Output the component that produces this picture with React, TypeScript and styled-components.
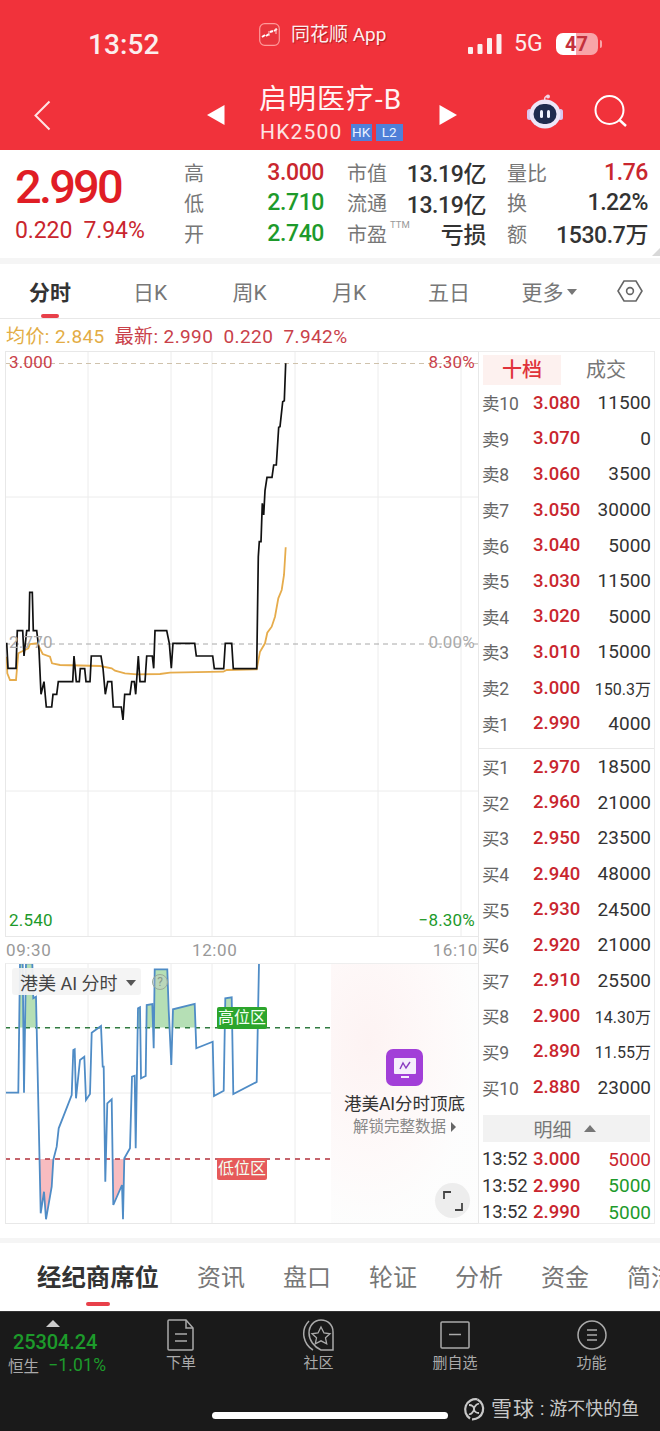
import React from 'react';
import styled, { createGlobalStyle } from 'styled-components';

const SANS = `Roboto, "Noto Sans CJK SC", sans-serif`;
const RED = '#c9262e';
const GREEN = '#1d9a2b';
const GRID = '#ececec';

const Global = createGlobalStyle`
  html, body { margin: 0; padding: 0; background: #fff; }
  body { font-family: ${SANS}; }
`;

const Page = styled.div`
  width: 660px; height: 1431px; overflow: hidden; display: flex; flex-direction: column;
  background: #fff; color: #333;
`;

/* ---------- header ---------- */
const Header = styled.header`
  height: 150px; flex: none; background: #f1323b; color: #fff; display: flex; flex-direction: column;
`;
const StatusRow = styled.div`
  height: 72px; display: grid; grid-template-columns: 259px 209px 1fr; align-items: start;
`;
const Clock = styled.div`
  padding: 27px 0 0 88px; font-size: 28px; line-height: 36px; font-weight: 500; color: #fbeeee; letter-spacing: .1px;
`;
const AppTag = styled.div`
  padding-top: 23px; display: flex; align-items: center; gap: 11px; font-size: 19px; line-height: 23px;
  color: #fdeeee; text-shadow: 1px 1px 1px rgba(90,0,0,.45);
`;
const StatusRight = styled.div`
  padding-top: 32px; display: flex; align-items: center; height: 24px;
`;
const FiveG = styled.span`
  margin: 0 13px 0 12px; font-size: 23px; line-height: 24px; color: #fbeeee;
`;
const Battery = styled.div<{ $level: number }>`
  position: relative; width: 42px; height: 22px; border-radius: 7px; text-align: center;
  font-size: 20px; line-height: 22px; font-weight: 700; color: #c4303c;
  background: linear-gradient(to right, #fff ${p => p.$level}%, #f8a4a8 ${p => p.$level}%);
  &::after {
    content: ''; position: absolute; right: -4px; top: 7px; width: 2px; height: 8px; border-radius: 0 2px 2px 0; background: #f8a4a8;
  }
`;
const NavRow = styled.div`
  height: 78px; display: grid; grid-template-columns: 207px 52px 180px 87px 67px 1fr; align-items: center;
`;
const Cell = styled.div<{ $pl?: number; $pt?: number }>`
  padding-left: ${p => p.$pl ?? 0}px; padding-top: ${p => p.$pt ?? 0}px; display: flex;
`;
const TitleBlock = styled.div`
  display: flex; flex-direction: column; align-items: flex-start;
`;
const Title = styled.div`
  font-size: 28px; line-height: 32px; letter-spacing: 1px; color: #fff4f4; margin-top: 6px; white-space: nowrap;
`;
const Code = styled.div`
  margin-top: 4px; padding-left: 1px; display: flex; align-items: center; font-size: 21px; line-height: 24px; color: #fde4e4; letter-spacing: 1.2px;
`;
const Badge = styled.span<{ $w: number; $ml: number }>`
  width: ${p => p.$w}px; margin-left: ${p => p.$ml}px; height: 17px; background: #4f80d8; color: #e8f0ff;
  font-size: 13.5px; line-height: 17px; text-align: center; letter-spacing: 0;
`;

/* ---------- quote ---------- */
const Quote = styled.section`
  height: 108px; flex: none; display: grid; grid-template-columns: 184px 140px 23px 139px 21px 141px; position: relative;
`;
const PriceBox = styled.div`
  padding: 12px 0 0 15px;
`;
const BigPrice = styled.div`
  font-size: 47px; line-height: 50px; font-weight: 500; color: #e01d25; letter-spacing: -2.8px;
`;
const PriceChange = styled.div`
  margin-top: 6px; font-size: 23px; line-height: 26px; color: #c9262e; letter-spacing: -.1px; white-space: pre;
`;
const StatCol = styled.div`
  padding-top: 7px; display: grid; grid-auto-rows: 30.5px; align-items: center;
`;
const StatRow = styled.div`
  display: flex; justify-content: space-between; align-items: center; white-space: nowrap;
`;
const StatLabel = styled.span`
  font-size: 20px; color: #777;
  position: relative;
`;
const Ttm = styled.sup`
  position: absolute; left: 43px; top: 0; font-size: 9.5px; line-height: 12px; color: #999;
`;
const StatValue = styled.span<{ $c?: string }>`
  font-size: 23px; font-weight: 500; letter-spacing: -.4px; color: ${p => p.$c ?? '#333'};
`;
const Fold = styled.div`
  position: absolute; right: 0; bottom: 2px; width: 0; height: 0;
  border-left: 8px solid transparent; border-bottom: 8px solid #d8d8d8;
`;
const Band = styled.div<{ $h: number }>`
  height: ${p => p.$h}px; flex: none; background: #f5f5f5;
`;
const Spacer = styled.div`
  height: 14px; flex: none;
`;

/* ---------- tabs ---------- */
const ChartTabs = styled.nav`
  height: 55px; flex: none; display: grid; grid-template-columns: 100px 100px 99px 100px 100px 100px 1fr;
  border-bottom: 1px solid #e8e8e8; box-sizing: border-box; position: relative;
`;
const ChartTab = styled.div<{ $on?: boolean }>`
  position: relative; display: flex; align-items: center; justify-content: center; gap: 3px; height: 54px;
  font-size: 21px; color: ${p => (p.$on ? '#333' : '#777')}; font-weight: ${p => (p.$on ? 700 : 400)};
  ${p => p.$on && `&::after { content: ''; position: absolute; left: 41px; bottom: 0; width: 18px; height: 4px; border-radius: 2px; background: #e8404a; }`}
`;
const Caret = styled.span<{ $c?: string; $s?: number }>`
  display: inline-block; width: 0; height: 0; margin-top: 2px;
  border-left: ${p => p.$s ?? 5}px solid transparent; border-right: ${p => p.$s ?? 5}px solid transparent;
  border-top: ${p => (p.$s ?? 5) + 1}px solid ${p => p.$c ?? '#777'};
`;
const Legend = styled.div`
  height: 32px; flex: none; box-sizing: border-box; display: flex; align-items: center; gap: 10px; padding: 0 0 2px 6px;
  font-size: 19px; letter-spacing: .4px; white-space: pre;
`;
const LegendText = styled.span<{ $c: string }>`
  color: ${p => p.$c};
`;

/* ---------- chart area ---------- */
const Board = styled.main`
  height: 873px; flex: none; padding-left: 5px; display: flex;
`;
const Left = styled.div`
  width: 473px; flex: none; display: flex; flex-direction: column;
`;
const MainChart = styled.div`
  position: relative; height: 586px; flex: none; box-sizing: border-box; border: 1px solid #e8e8e8; border-right: 0;
`;
const Plot = styled.svg`
  display: block; width: 100%; height: 100%;
`;
const AxisLabel = styled.span<{ $c: string; $side: 'left' | 'right'; $y: number }>`
  position: absolute; ${p => p.$side}: 3px; top: ${p => p.$y}px;
  font-size: 17px; line-height: 20px; color: ${p => p.$c}; letter-spacing: .2px;
`;
const TimeAxis = styled.div`
  height: 26px; flex: none; box-sizing: border-box; padding: 0 0 1px 1px; display: grid; grid-template-columns: 186px 1fr auto; align-items: center;
  font-size: 17px; color: #999; letter-spacing: .6px;
`;
const SubChart = styled.div`
  position: relative; height: 261px; flex: none; box-sizing: border-box; border-bottom: 1px solid #e8e8e8; border-left: 1px solid #e8e8e8;
  border-top: 1px solid #eee;
`;
const IndicatorChip = styled.div`
  position: absolute; left: 6px; top: 4px; width: 129px; height: 27px; box-sizing: border-box; background: rgba(243,243,243,.94);
  border-radius: 3px; padding-left: 8px; display: flex; align-items: center; gap: 8px; font-size: 18px; color: #444; white-space: pre;
`;
const Help = styled.div`
  position: absolute; left: 146px; top: 10px; width: 16px; height: 16px; box-sizing: border-box; border: 1.5px solid #9aaa9a;
  border-radius: 50%; font-size: 12px; line-height: 14px; text-align: center; color: #8a9a8a; background: rgba(200,200,200,.3);
`;
const ZoneTag = styled.div<{ $bg: string; $y: number }>`
  position: absolute; left: 211px; top: ${p => p.$y}px; width: 50px; height: 22px; border-radius: 2px; background: ${p => p.$bg};
  color: #f2fff2; font-size: 16px; line-height: 22px; text-align: center;
`;
const Unlock = styled.div`
  position: absolute; left: 325px; right: 0; top: 0; bottom: 0; display: flex; flex-direction: column; align-items: center;
  padding-top: 85px; box-sizing: border-box;
  background: radial-gradient(ellipse at 25% 30%, #fdf3f3 0%, rgba(254,249,249,.9) 45%, rgba(253,253,253,.9) 70%),
    linear-gradient(#fdfdfd, #f9fbfa);
`;
const UnlockIcon = styled.div`
  width: 37px; height: 37px; border-radius: 7px; background: #a23fd8; display: flex; align-items: center; justify-content: center;
`;
const UnlockTitle = styled.div`
  margin-top: 6px; font-size: 17.5px; line-height: 24px; color: #333; white-space: nowrap;
`;
const UnlockSub = styled.div`
  display: flex; align-items: center; gap: 5px; margin-top: 0; font-size: 15.5px; line-height: 22px; color: #888; white-space: nowrap;
`;
const TriRight = styled.span`
  width: 0; height: 0; border-top: 5px solid transparent; border-bottom: 5px solid transparent; border-left: 5px solid #666;
`;
const ExpandBtn = styled.div`
  position: absolute; right: 8px; bottom: 5px; width: 35px; height: 35px; border-radius: 50%; background: #ededed;
  display: flex; align-items: center; justify-content: center;
`;

/* ---------- order book ---------- */
const Book = styled.aside`
  width: 177px; flex: none; box-sizing: border-box; height: 873px; border: 1px solid #ececec; border-left: 1px solid #e8e8e8;
  display: flex; flex-direction: column; padding: 3px 3px 0 3px;
`;
const BookTabs = styled.div`
  height: 30px; flex: none; margin-left: 1px; display: grid; grid-template-columns: 78px 1fr; align-items: center;
`;
const BookTab = styled.div<{ $on?: boolean }>`
  height: 30px; line-height: 30px; text-align: center; font-size: 20px; letter-spacing: 0;
  color: ${p => (p.$on ? '#e0323a' : '#777')}; background: ${p => (p.$on ? '#fdf1ef' : 'transparent')};
  font-weight: ${p => (p.$on ? 500 : 400)};
`;
const BookRows = styled.div`
  flex: none; display: grid; grid-auto-rows: 35.6px;
`;
const BookRow = styled.div`
  display: grid; grid-template-columns: 51px 48px 1fr; align-items: center; white-space: nowrap;
`;
const Side = styled.span`
  font-size: 17.5px; color: #666; letter-spacing: -.2px;
`;
const Px = styled.span<{ $c?: string }>`
  font-size: 18.5px; font-weight: 500; color: ${p => p.$c ?? RED}; letter-spacing: 0;
`;
const Qty = styled.span<{ $c?: string; $small?: boolean }>`
  text-align: right; font-size: ${p => (p.$small ? 16 : 19)}px; color: ${p => p.$c ?? '#333'};
`;
const BookDivider = styled.div`
  height: 1px; margin: 7px -3px 0; background: #e8e8e8; flex: none;
`;
const DetailHead = styled.div`
  flex: none; height: 27px; margin: 10px 1px 0; background: #f2f2f2; display: flex; align-items: center; justify-content: center; gap: 12px;
  font-size: 19px; color: #777; padding-right: 4px;
`;
const UpTri = styled.span<{ $c: string; $w: number; $h: number }>`
  display: block; width: 0; height: 0; border-left: ${p => p.$w}px solid transparent; border-right: ${p => p.$w}px solid transparent;
  border-bottom: ${p => p.$h}px solid ${p => p.$c};
`;
const Trades = styled.div`
  flex: none; margin-top: 4px; display: grid; grid-auto-rows: 26.5px;
`;
const Trade = styled.div`
  display: grid; grid-template-columns: 51px 48px 1fr; align-items: center;
`;
const TradeTime = styled.span`
  font-size: 18.5px; color: #333; letter-spacing: -.1px;
`;

/* ---------- info tabs ---------- */
const InfoTabs = styled.nav`
  height: 68px; flex: none; display: flex; gap: 38px; padding-left: 37px; align-items: center; overflow: hidden; position: relative;
  white-space: nowrap;
`;
const InfoTab = styled.div<{ $on?: boolean }>`
  position: relative; flex: none; font-size: ${p => (p.$on ? 24.4 : 24)}px; line-height: 68px; height: 68px; padding-top: 1px; box-sizing: border-box;
  font-weight: ${p => (p.$on ? 700 : 400)}; color: ${p => (p.$on ? '#333' : '#777')};
  ${p => p.$on && `&::after { content: ''; position: absolute; left: 49px; bottom: 5px; width: 24px; height: 4px; border-radius: 2px; background: #e8404a; }`}
`;

/* ---------- bottom ---------- */
const Footer = styled.footer`
  flex: 1; background: #1a1a1a; border-top: 1px solid #333; box-sizing: border-box; display: flex; flex-direction: column;
`;
const FooterNav = styled.div`
  height: 67px; flex: none; display: grid; grid-template-columns: 112px 138px 137px 136px 1fr;
`;
const IndexBlock = styled.div`
  display: flex; flex-direction: column; position: relative; padding-left: 13px;
`;
const IndexTri = styled.div`
  margin: 8px 0 0 33px;
`;
const IndexValue = styled.div`
  margin-top: 3px; font-size: 20px; line-height: 24px; font-weight: 500; color: ${GREEN}; letter-spacing: -.1px;
`;
const IndexMeta = styled.div`
  margin: 0 0 0 -5px; display: flex; align-items: center; gap: 9px; white-space: nowrap;
`;
const IndexName = styled.span`
  font-size: 15.5px; color: #aaa;
`;
const IndexPct = styled.span`
  font-size: 17.5px; color: ${GREEN}; letter-spacing: .2px;
`;
const NavItem = styled.div`
  display: flex; flex-direction: column; align-items: center; padding-top: 7px; font-size: 15px; line-height: 20px; color: #aaa; gap: 2px;
`;
const NavIcon = styled.svg`
  display: block; width: 34px; height: 32px;
`;
const FooterBase = styled.div`
  flex: 1; display: flex; align-items: flex-start; padding-left: 212px;
`;
const HomeBar = styled.div`
  width: 236px; height: 7px; margin-top: 33px; border-radius: 4px; background: #fff; flex: none;
`;
const Mark = styled.div`
  margin: 18px 0 0 14px; display: flex; align-items: center; font-size: 18px; line-height: 24px; color: #c8c8c8; white-space: pre;
`;
const MarkBrand = styled.span`
  margin-left: 5px; font-size: 21px; letter-spacing: 1px;
`;
const MarkSep = styled.span`
  margin: 0 5px 0 5px;
`;

/* ---------- data ---------- */
type P = [number, number][];
const toPts = (a: P, oy: number) => a.map(([x, y]) => `${(x / 3).toFixed(1)},${(oy + y / 3).toFixed(1)}`).join(' ');

const blackLine: P = [[20,908],[24,985],[48,985],[52,872],[68,872],[72,948],[80,872],[87,872],[89,757],[97,757],[100,872],[110,872],[117,930],[123,1063],[132,1025],[139,1101],[155,1101],[159,1063],[170,1063],[175,1025],[218,1025],[222,948],[229,1025],[238,1025],[241,986],[254,986],[258,1025],[270,1025],[274,948],[303,948],[309,985],[316,1063],[323,1025],[335,1025],[340,1101],[364,1101],[369,1140],[374,1063],[390,1063],[395,1025],[403,1025],[407,1063],[415,948],[420,1025],[435,1025],[440,948],[457,948],[461,985],[465,872],[500,872],[508,910],[514,985],[519,910],[584,910],[589,948],[638,948],[643,986],[671,986],[676,910],[695,910],[700,986],[770,986],[775,650],[778,605],[783,605],[787,490],[791,525],[795,452],[801,412],[816,412],[821,375],[829,375],[836,262],[840,260],[848,185],[853,182],[857,70]];
const avgLine: P = [[20,950],[22,1000],[30,1020],[48,1020],[55,940],[70,932],[85,925],[90,912],[112,910],[128,942],[150,950],[156,970],[180,975],[300,978],[335,985],[345,992],[375,1000],[410,1003],[480,1002],[510,998],[670,995],[680,990],[770,988],[780,935],[795,910],[802,878],[815,860],[825,830],[835,775],[845,750],[852,705],[857,622]];
const aiLine: P = [[18,488],[55,488],[60,100],[68,100],[72,488],[78,100],[97,100],[100,205],[108,200],[122,850],[132,785],[138,868],[155,770],[160,690],[170,650],[176,595],[190,560],[215,495],[220,360],[224,358],[228,505],[240,390],[253,380],[258,510],[270,492],[275,308],[303,288],[308,410],[311,410],[316,755],[322,520],[335,508],[340,825],[366,765],[369,868],[373,685],[390,655],[396,440],[404,437],[407,655],[414,235],[420,232],[423,445],[437,438],[440,225],[457,222],[461,355],[464,118],[502,118],[506,240],[514,405],[519,238],[584,222],[589,355],[638,335],[642,498],[671,482],[676,205],[695,202],[700,492],[770,456],[777,100]];

const asks = [['卖10','3.080','11500'],['卖9','3.070','0'],['卖8','3.060','3500'],['卖7','3.050','30000'],['卖6','3.040','5000'],['卖5','3.030','11500'],['卖4','3.020','5000'],['卖3','3.010','15000'],['卖2','3.000','150.3万'],['卖1','2.990','4000']];
const bids = [['买1','2.970','18500'],['买2','2.960','21000'],['买3','2.950','23500'],['买4','2.940','48000'],['买5','2.930','24500'],['买6','2.920','21000'],['买7','2.910','25500'],['买8','2.900','14.30万'],['买9','2.890','11.55万'],['买10','2.880','23000']];
const VLINES = [88, 171, 212, 295, 378, 461];

const Rows = ({ data }: { data: string[][] }) => (
  <BookRows>
    {data.map(r => (
      <BookRow key={r[0]}>
        <Side>{r[0]}</Side>
        <Px>{r[1]}</Px>
        <Qty $small={r[2].includes('万')}>{r[2]}</Qty>
      </BookRow>
    ))}
  </BookRows>
);

const Grid = ({ ys, y1, y2 }: { ys: number[]; y1: number; y2: number }) => (
  <g stroke={GRID} strokeWidth="1">
    {VLINES.map(x => <line key={x} x1={x} x2={x} y1={y1} y2={y2} />)}
    {ys.map(y => <line key={y} x1="5" x2="478" y1={y} y2={y} />)}
  </g>
);

export default function App() {
  return (
    <Page>
      <Global />
      <Header>
        <StatusRow>
          <Clock>13:52</Clock>
          <AppTag>
            <svg width="21" height="23" viewBox="0 0 21 23">
              <rect x=".7" y=".7" width="19.6" height="21.6" rx="5" fill="#e8353d" stroke="#ff9a9a" strokeWidth="1.2" />
              <path d="M3 14l3-2M7 13l3-2M11 9l3-1M15 8l3-2" stroke="#fff" strokeWidth="2" />
              <path d="M17 5v6M10 8v5" stroke="#ffd2d2" strokeWidth="1" />
            </svg>
            同花顺 App
          </AppTag>
          <StatusRight>
            <svg width="34" height="22" viewBox="0 0 34 22">
              <rect x="0" y="14" width="5" height="7" rx="1" fill="#fbeeee" />
              <rect x="9.5" y="11" width="5" height="10" rx="1" fill="#fbeeee" />
              <rect x="19" y="5" width="5" height="16" rx="1" fill="#fbeeee" />
              <rect x="28.5" y="1" width="5" height="20" rx="1" fill="#fbeeee" />
            </svg>
            <FiveG>5G</FiveG>
            <Battery $level={47}>47</Battery>
          </StatusRight>
        </StatusRow>
        <NavRow>
          <Cell $pl={33} $pt={8}>
            <svg width="18" height="31" viewBox="0 0 18 31" fill="none">
              <path d="M16.5 1.5L2.5 15.5l14 14" stroke="#ffe4e4" strokeWidth="2" />
            </svg>
          </Cell>
          <Cell $pt={8}>
            <svg width="18" height="20" viewBox="0 0 18 20"><path d="M0 10L17.500 0v20z" fill="#fff" /></svg>
          </Cell>
          <TitleBlock>
            <Title>启明医疗-B</Title>
            <Code>
              HK2500
              <Badge $w={21} $ml={8}>HK</Badge>
              <Badge $w={27} $ml={4}>L2</Badge>
            </Code>
          </TitleBlock>
          <Cell $pt={8}>
            <svg width="18" height="20" viewBox="0 0 18 20"><path d="M18 10L.5 0v20z" fill="#fff" /></svg>
          </Cell>
          <Cell $pt={2}>
            <svg width="38" height="36" viewBox="0 0 38 36">
              <path d="M19 7c-1-3 0-5 3-5" stroke="#f4d4e4" strokeWidth="1.5" fill="none" />
              <circle cx="22" cy="2.5" r="2" fill="#f4d4e4" />
              <rect x="1" y="15" width="5" height="11" rx="2.5" fill="#d8c6ee" />
              <rect x="32" y="15" width="5" height="11" rx="2.5" fill="#d8c6ee" />
              <ellipse cx="19" cy="20" rx="15.5" ry="14.5" fill="#ece6f8" />
              <rect x="7.5" y="10" width="23" height="20" rx="10" fill="#1f2b4f" />
              <rect x="14" y="16" width="3" height="8" rx="1.5" fill="#eef2ff" />
              <rect x="21" y="16" width="3" height="8" rx="1.5" fill="#eef2ff" />
            </svg>
          </Cell>
          <Cell $pt={2}>
            <svg width="36" height="36" viewBox="0 0 36 36" fill="none" stroke="#fff" strokeWidth="2">
              <circle cx="16.5" cy="16" r="14" />
              <path d="M26.500 26l6.500 6" strokeWidth="2.4" />
            </svg>
          </Cell>
        </NavRow>
      </Header>

      <Quote>
        <PriceBox>
          <BigPrice>2.990</BigPrice>
          <PriceChange>0.220  7.94%</PriceChange>
        </PriceBox>
        <StatCol>
          <StatRow><StatLabel>高</StatLabel><StatValue $c="#c9262e">3.000</StatValue></StatRow>
          <StatRow><StatLabel>低</StatLabel><StatValue $c={GREEN}>2.710</StatValue></StatRow>
          <StatRow><StatLabel>开</StatLabel><StatValue $c={GREEN}>2.740</StatValue></StatRow>
        </StatCol>
        <span />
        <StatCol>
          <StatRow><StatLabel>市值</StatLabel><StatValue>13.19亿</StatValue></StatRow>
          <StatRow><StatLabel>流通</StatLabel><StatValue>13.19亿</StatValue></StatRow>
          <StatRow><StatLabel>市盈<Ttm>TTM</Ttm></StatLabel><StatValue>亏损</StatValue></StatRow>
        </StatCol>
        <span />
        <StatCol>
          <StatRow><StatLabel>量比</StatLabel><StatValue $c="#c9262e">1.76</StatValue></StatRow>
          <StatRow><StatLabel>换</StatLabel><StatValue>1.22%</StatValue></StatRow>
          <StatRow><StatLabel>额</StatLabel><StatValue>1530.7万</StatValue></StatRow>
        </StatCol>
        <Fold />
      </Quote>
      <Band $h={6} />

      <ChartTabs>
        <ChartTab $on>分时</ChartTab>
        <ChartTab>日K</ChartTab>
        <ChartTab>周K</ChartTab>
        <ChartTab>月K</ChartTab>
        <ChartTab>五日</ChartTab>
        <ChartTab>更多<Caret /></ChartTab>
        <ChartTab>
          <svg width="26" height="26" viewBox="0 0 26 26" fill="none" stroke="#666" strokeWidth="1.6">
            <path d="M7 3h12l6 10-6 10H7L1 13z" />
            <circle cx="13" cy="13" r="3.4" />
          </svg>
        </ChartTab>
      </ChartTabs>

      <Legend>
        <LegendText $c="#e3ad45">均价: 2.845</LegendText>
        <LegendText $c="#c9414a">最新: 2.990  0.220  7.942%</LegendText>
      </Legend>

      <Board>
        <Left>
          <MainChart>
            <Plot viewBox="6 352 472 584" preserveAspectRatio="none">
              <Grid ys={[497, 791]} y1={351} y2={937} />
              <line x1="5" x2="478" y1="363.5" y2="363.5" stroke="#cfc2ac" strokeWidth="1" strokeDasharray="5 4" />
              <line x1="5" x2="478" y1="644" y2="644" stroke="#a8a8a8" strokeWidth="1" strokeDasharray="5 4" />
              <polyline points={toPts(avgLine, 340)} fill="none" stroke="#e6ac4c" strokeWidth="1.8" />
              <polyline points={toPts(blackLine, 340)} fill="none" stroke="#111" strokeWidth="1.7" />
            </Plot>
            <AxisLabel $c="#c9414a" $side="left" $y={0}>3.000</AxisLabel>
            <AxisLabel $c="#c9414a" $side="right" $y={0}>8.30%</AxisLabel>
            <AxisLabel $c="#aaa" $side="left" $y={280}>2.770</AxisLabel>
            <AxisLabel $c="#aaa" $side="right" $y={280}>0.00%</AxisLabel>
            <AxisLabel $c={GREEN} $side="left" $y={558}>2.540</AxisLabel>
            <AxisLabel $c={GREEN} $side="right" $y={558}>−8.30%</AxisLabel>
          </MainChart>
          <TimeAxis>
            <span>09:30</span>
            <span>12:00</span>
            <span>16:10</span>
          </TimeAxis>
          <SubChart>
            <Plot viewBox="6 964 472 259" preserveAspectRatio="none">
              <defs>
                <clipPath id="hi"><rect x="5" y="963" width="473" height="64.7" /></clipPath>
                <clipPath id="lo"><rect x="5" y="1159" width="473" height="66" /></clipPath>
              </defs>
              <Grid ys={[1093]} y1={963} y2={1224} />
              <polygon points={`6,1027.7 ${toPts(aiLine, 930)} 259,1027.7`} fill="#b5dfb5" clipPath="url(#hi)" />
              <polygon points={`6,1159 ${toPts(aiLine, 930)} 259,1159`} fill="#f8bcc0" clipPath="url(#lo)" />
              <line x1="5" x2="331" y1="1027.7" y2="1027.7" stroke="#2f7a3f" strokeWidth="1.6" strokeDasharray="5 5" />
              <line x1="5" x2="331" y1="1159" y2="1159" stroke="#b2323c" strokeWidth="1.6" strokeDasharray="5 5" />
              <polyline points={toPts(aiLine, 930)} fill="none" stroke="#4f8cc6" strokeWidth="1.8" />
            </Plot>
            <IndicatorChip>港美 AI 分时<Caret $c="#555" $s={5} /></IndicatorChip>
            <Help>?</Help>
            <ZoneTag $bg="#2ca52c" $y={43}>高位区</ZoneTag>
            <ZoneTag $bg="#e65a5a" $y={194}>低位区</ZoneTag>
            <Unlock>
              <UnlockIcon>
                <svg width="26" height="26" viewBox="0 0 26 26">
                  <rect x="2" y="3" width="22" height="16" rx="1" fill="#f6eefc" />
                  <path d="M8 14l3-6 3 5 4-6" stroke="#8a3cc0" strokeWidth="1.4" fill="none" />
                  <rect x="9" y="21" width="8" height="2" fill="#f6eefc" />
                </svg>
              </UnlockIcon>
              <UnlockTitle>港美AI分时顶底</UnlockTitle>
              <UnlockSub>解锁完整数据<TriRight /></UnlockSub>
              <ExpandBtn>
                <svg width="20" height="20" viewBox="0 0 20 20" fill="none" stroke="#444" strokeWidth="1.8">
                  <path d="M1 8V1h7M19 12v7h-7" />
                </svg>
              </ExpandBtn>
            </Unlock>
          </SubChart>
        </Left>

        <Book>
          <BookTabs>
            <BookTab $on>十档</BookTab>
            <BookTab>成交</BookTab>
          </BookTabs>
          <Rows data={asks} />
          <BookDivider />
          <Rows data={bids} />
          <DetailHead>明细<UpTri $c="#777" $w={6} $h={7} /></DetailHead>
          <Trades>
            <Trade><TradeTime>13:52</TradeTime><Px>3.000</Px><Qty $c={RED}>5000</Qty></Trade>
            <Trade><TradeTime>13:52</TradeTime><Px>2.990</Px><Qty $c={GREEN}>5000</Qty></Trade>
            <Trade><TradeTime>13:52</TradeTime><Px>2.990</Px><Qty $c={GREEN}>5000</Qty></Trade>
          </Trades>
        </Book>
      </Board>

      <Spacer />
      <Band $h={5} />

      <InfoTabs>
        <InfoTab $on>经纪商席位</InfoTab>
        <InfoTab>资讯</InfoTab>
        <InfoTab>盘口</InfoTab>
        <InfoTab>轮证</InfoTab>
        <InfoTab>分析</InfoTab>
        <InfoTab>资金</InfoTab>
        <InfoTab>简洁</InfoTab>
      </InfoTabs>

      <Footer>
        <FooterNav>
          <IndexBlock>
            <IndexTri><UpTri $c="#ccc" $w={7} $h={7} /></IndexTri>
            <IndexValue>25304.24</IndexValue>
            <IndexMeta>
              <IndexName>恒生</IndexName>
              <IndexPct>−1.01%</IndexPct>
            </IndexMeta>
          </IndexBlock>
          <NavItem>
            <NavIcon viewBox="0 0 34 32" fill="none" stroke="#aaa" strokeWidth="1.5">
              <path d="M5 1h17l7 8v21a1 1 0 0 1-1 1H5a1 1 0 0 1-1-1V2a1 1 0 0 1 1-1z" />
              <path d="M22 1v8h7M11 15h12M11 22h12" />
            </NavIcon>
            下单
          </NavItem>
          <NavItem>
            <NavIcon viewBox="0 0 34 32" fill="none" stroke="#aaa" strokeWidth="1.5">
              <path d="M19 1c-7 0-12 6-12 13 0 7 5 14 12 17h12V13C31 6 26 1 19 1z" />
              <path d="M7 2C2 7 1 12 2 18c1 5 4 10 9 13" />
              <path d="M19 8l3 6 6 .8-4.500 4 1.200 6-5.700-3-5.700 3 1.200-6-4.500-4 6-.8z" strokeWidth="1.3" />
            </NavIcon>
            社区
          </NavItem>
          <NavItem>
            <NavIcon viewBox="0 0 34 32" fill="none" stroke="#aaa" strokeWidth="1.5">
              <rect x="3" y="3" width="28" height="26" rx="1" />
              <path d="M11 15.500h12" />
            </NavIcon>
            删自选
          </NavItem>
          <NavItem>
            <NavIcon viewBox="0 0 34 32" fill="none" stroke="#aaa" strokeWidth="1.5">
              <circle cx="17" cy="16" r="14" />
              <path d="M12 11h10M12 16h10M12 21h10" />
            </NavIcon>
            功能
          </NavItem>
        </FooterNav>
        <FooterBase>
          <HomeBar />
          <Mark>
            <svg width="24" height="24" viewBox="0 0 24 24" fill="none" stroke="#c8c8c8" strokeWidth="2.2">
              <path d="M8 21.500A10.500 10.500 0 0 1 15.500 2.300" />
              <path d="M15.500 2.500A10.500 10.500 0 0 1 10 22.300" />
              <path d="M7 8c3 0 5 2 5 4s-3 6-5 5M17 16c-3 0-5-2-5-4s3-6 5-5" strokeWidth="1.8" />
            </svg>
            <MarkBrand>雪球</MarkBrand>
            <MarkSep>:</MarkSep>
            游不快的鱼
          </Mark>
        </FooterBase>
      </Footer>
    </Page>
  );
}
